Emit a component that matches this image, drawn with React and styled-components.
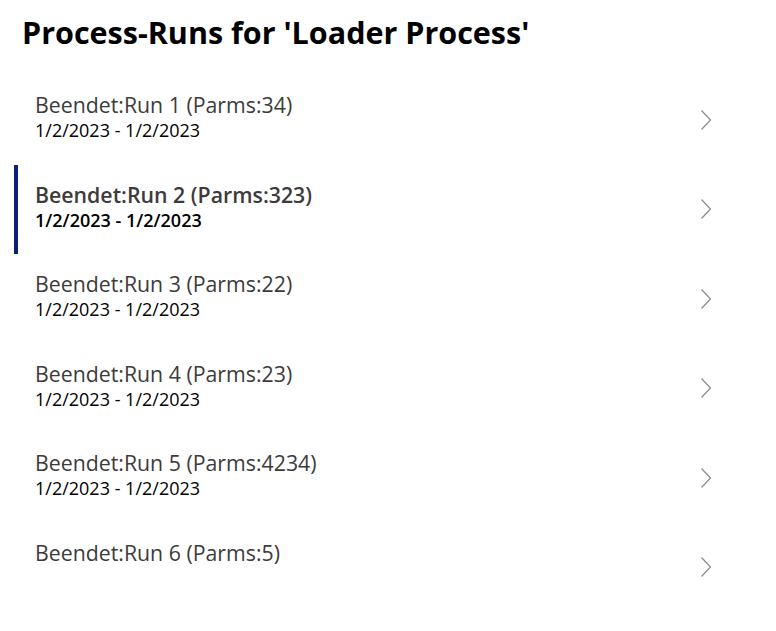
import styled, { createGlobalStyle } from "styled-components";

const GlobalStyle = createGlobalStyle`
  html, body {
    margin: 0;
    padding: 0;
    background: #fff;
    font-family: "Open Sans", "Noto Sans", sans-serif;
  }
`;

const Page = styled.div`
  width: 776px;
  height: 631px;
  background: #fff;
  overflow: hidden;
`;

const Heading = styled.h1`
  margin: 0;
  padding: 13px 0 0 22px;
  height: 75px;
  box-sizing: border-box;
  font-size: 30.5px;
  line-height: 38px;
  font-weight: 700;
  color: #000;
`;

const List = styled.div`
  display: flex;
  flex-direction: column;
  padding-left: 14px;
  padding-right: 64px;
`;

const Row = styled.div`
  display: flex;
  align-items: center;
  height: 89.5px;
  box-sizing: border-box;
  border-left: 4px solid ${(p) => (p.$selected ? "#0a1f78" : "transparent")};
  cursor: pointer;
`;

const Text = styled.div`
  flex: 1;
  align-self: flex-start;
  display: flex;
  flex-direction: column;
  padding: 19px 0 0 17px;
`;

const RunTitle = styled.div`
  font-size: 21.3px;
  line-height: 21px;
  font-weight: ${(p) => (p.$selected ? 600 : 400)};
  color: #3d3b3b;
`;

const RunDates = styled.div`
  margin-top: 6px;
  font-size: 18px;
  line-height: 18px;
  font-weight: ${(p) => (p.$selected ? 600 : 400)};
  color: #000;
  min-height: 18px;
`;

const Chevron = styled.svg`
  width: 12px;
  height: 22px;
  flex: none;
`;

const runs = [
  { id: 1, parms: 34, dates: "1/2/2023 - 1/2/2023" },
  { id: 2, parms: 323, dates: "1/2/2023 - 1/2/2023" },
  { id: 3, parms: 22, dates: "1/2/2023 - 1/2/2023" },
  { id: 4, parms: 23, dates: "1/2/2023 - 1/2/2023" },
  { id: 5, parms: 4234, dates: "1/2/2023 - 1/2/2023" },
  { id: 6, parms: 5, dates: "" },
];

export default function App() {
  const selectedId = 2;

  return (
    <Page>
      <GlobalStyle />
      <Heading>Process-Runs for 'Loader Process'</Heading>
      <List>
        {runs.map((run) => {
          const selected = run.id === selectedId;
          return (
            <Row key={run.id} $selected={selected}>
              <Text>
                <RunTitle $selected={selected}>
                  Beendet:Run {run.id} (Parms:{run.parms})
                </RunTitle>
                <RunDates $selected={selected}>{run.dates}</RunDates>
              </Text>
              <Chevron viewBox="0 0 12 22">
                <path
                  d="M1.5 1.5 L10.5 11 L1.5 20.5"
                  fill="none"
                  stroke="#8a8a8a"
                  strokeWidth="1.2"
                />
              </Chevron>
            </Row>
          );
        })}
      </List>
    </Page>
  );
}
